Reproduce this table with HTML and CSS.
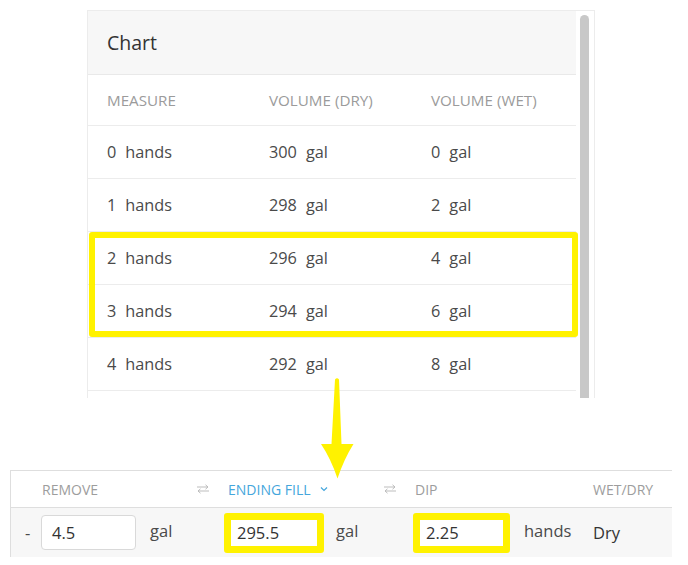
FILE: index.html
```html
<!DOCTYPE html>
<html>
<head>
<meta charset="utf-8">
<link rel="stylesheet" href="styles.css">
</head>
<body>
<div class="page">
  <div class="top">
    <div class="panel">
      <div class="panel-main">
        <div class="panel-head">Chart</div>
        <div class="row col-head">
          <div class="cell">MEASURE</div>
          <div class="cell">VOLUME (DRY)</div>
          <div class="cell">VOLUME (WET)</div>
        </div>
        <div class="row">
          <div class="cell"><span class="num">0</span>hands</div>
          <div class="cell"><span class="num">300</span>gal</div>
          <div class="cell"><span class="num">0</span>gal</div>
        </div>
        <div class="row">
          <div class="cell"><span class="num">1</span>hands</div>
          <div class="cell"><span class="num">298</span>gal</div>
          <div class="cell"><span class="num">2</span>gal</div>
        </div>
        <div class="row">
          <div class="cell"><span class="num">2</span>hands</div>
          <div class="cell"><span class="num">296</span>gal</div>
          <div class="cell"><span class="num">4</span>gal</div>
        </div>
        <div class="row">
          <div class="cell"><span class="num">3</span>hands</div>
          <div class="cell"><span class="num">294</span>gal</div>
          <div class="cell"><span class="num">6</span>gal</div>
        </div>
        <div class="row">
          <div class="cell"><span class="num">4</span>hands</div>
          <div class="cell"><span class="num">292</span>gal</div>
          <div class="cell"><span class="num">8</span>gal</div>
        </div>
      </div>
      <div class="scroll"><div class="thumb"></div></div>
      <div class="hl-rows"></div>
    </div>
    <svg class="arrow" width="40" height="104" viewBox="0 0 40 104">
      <path d="M17 2.5 Q19 0 21 2.5 L23.5 67 Q29 67 35.5 67 Q26 82 19.5 101.5 Q13 82 3 67 Q9 67 13.5 67 Z" fill="#fff200"/>
    </svg>
  </div>

  <div class="calc">
    <div class="calc-head">
      <div class="h h-remove">REMOVE</div>
      <div class="h h-swap"><svg width="14" height="10" viewBox="0 0 14 10"><path d="M1 3H12M9.5 0.8L12 3L9.5 5.2M13 7H2M4.5 4.8L2 7L4.5 9.2" fill="none" stroke="#bdbdbd" stroke-width="1"/></svg></div>
      <div class="h h-fill active">ENDING FILL <svg class="chev" width="8" height="6" viewBox="0 0 8 6"><path d="M1 1.5L4 4.5L7 1.5" fill="none" stroke="#45a6dc" stroke-width="1.2"/></svg></div>
      <div class="h h-swap"><svg width="14" height="10" viewBox="0 0 14 10"><path d="M1 3H12M9.5 0.8L12 3L9.5 5.2M13 7H2M4.5 4.8L2 7L4.5 9.2" fill="none" stroke="#bdbdbd" stroke-width="1"/></svg></div>
      <div class="h h-dip">DIP</div>
      <div class="h h-wet">WET/DRY</div>
    </div>
    <div class="calc-row">
      <div class="c c-minus">-</div>
      <div class="c c-in1"><div class="input">4.5</div></div>
      <div class="c c-unit1">gal</div>
      <div class="c c-in2"><div class="hl-box"><div class="input plain">295.5</div></div></div>
      <div class="c c-unit2">gal</div>
      <div class="c c-in3"><div class="hl-box"><div class="input plain">2.25</div></div></div>
      <div class="c c-unit3">hands</div>
      <div class="c c-wet">Dry</div>
    </div>
  </div>
</div>
</body>
</html>
```

FILE: styles.css
```css
* { box-sizing: border-box; }
html, body { margin: 0; padding: 0; background: #fff; }
body {
  font-family: "Open Sans", "DejaVu Sans", sans-serif;
  color: #444;
  width: 688px;
  height: 565px;
  overflow: hidden;
}
.page { position: relative; }

.top {
  position: relative;
  padding: 10px 0 0 87px;
  height: 398px;
}
.panel {
  position: relative;
  width: 508px;
  height: 388px;
  border: 1px solid #ececec;
  border-bottom: none;
  display: flex;
  overflow: hidden;
}
.panel-main { width: 488px; flex: none; }
.panel-head {
  height: 64px;
  background: #f7f7f7;
  border-bottom: 1px solid #e9e9e9;
  padding-left: 19px;
  display: flex;
  align-items: center;
  font-size: 19.5px;
  color: #333;
}
.row {
  display: flex;
  height: 53px;
  border-bottom: 1px solid #ececec;
  align-items: center;
  padding-left: 19px;
  font-size: 16.3px;
  color: #4a4a4a;
}
.row.col-head {
  height: 51px;
  font-size: 15.2px;
  color: #9b9b9b;
}
.cell { width: 162px; flex: none; white-space: nowrap; }
.num { margin-right: 9px; }

.scroll { flex: 1; position: relative; }
.thumb {
  position: absolute;
  left: 4px;
  top: 4px;
  width: 9px;
  height: 400px;
  border-radius: 5px;
  background: #c8c8c8;
}

.hl-rows {
  position: absolute;
  left: 1px;
  top: 221px;
  width: 489px;
  height: 105px;
  border: 6px solid #fff200;
  border-radius: 3px;
}

.arrow {
  position: absolute;
  left: 318px;
  top: 377px;
  z-index: 3;
}

.calc {
  position: relative;
  margin: 72px 0 0 10px;
  width: 662px;
  border-top: 1px solid #dedede;
  border-left: 1px solid #dedede;
}
.calc-head {
  display: flex;
  height: 37px;
  align-items: center;
  border-bottom: 1px solid #dedede;
  padding-left: 31px;
  font-size: 14px;
  color: #9d9d9d;
}
.h { flex: none; white-space: nowrap; display: flex; align-items: center; }
.h-remove { width: 154px; }
.h-swap { width: 32px; }
.h-fill { width: 155px; }
.h-fill.active { color: #45a6dc; }
.chev { margin-left: 9px; }
.h-dip { width: 178px; }
.calc-row {
  display: flex;
  height: 49px;
  align-items: center;
  background: #f7f7f7;
  padding-left: 14px;
  font-size: 16.5px;
  color: #4a4a4a;
}
.c { flex: none; white-space: nowrap; }
.c-minus { width: 16px; }
.c-in1 { width: 95px; }
.c-unit1 { padding-left: 14px; width: 88px; margin-top: -4px; }
.c-in2 { width: 100px; }
.c-unit2 { padding-left: 12px; width: 89px; margin-top: -4px; }
.c-in3 { width: 97px; }
.c-unit3 { padding-left: 14px; width: 83px; margin-top: -4px; }
.c-wet { font-size: 16.5px; color: #333; }
.input {
  height: 35px;
  background: #fff;
  border: 1px solid #d9d9d9;
  border-radius: 4px;
  padding-left: 10px;
  display: flex;
  align-items: center;
  color: #333;
}
.hl-box {
  border: 7px solid #fff200;
  border-radius: 3px;
  height: 40px;
  background: #fff;
}
.input.plain {
  border: none;
  height: 26px;
  padding-left: 6px;
  border-radius: 0;
}
```
